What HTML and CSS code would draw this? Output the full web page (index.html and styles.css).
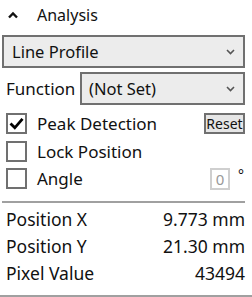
FILE: index.html
```html
<!DOCTYPE html>
<html lang="en">
<head>
  <meta charset="UTF-8" />
  <title>Analysis</title>
  <link rel="stylesheet" href="styles.css">
</head>
<body>
  <div class="panel">
    <div class="header">
      <svg class="caret" width="10" height="8" viewBox="0 0 10 8"><path d="M1 6.5 L5 2.5 L9 6.5" fill="none" stroke="#111" stroke-width="2.4"/></svg>
      <span>Analysis</span>
    </div>

    <div class="select wide">
      <span>Line Profile</span>
      <svg class="arrow" width="9" height="6" viewBox="0 0 9 6"><path d="M1 1 L4.5 4.5 L8 1" fill="none" stroke="#555" stroke-width="1.6"/></svg>
    </div>

    <div class="row func">
      <label>Function</label>
      <div class="select">
        <span>(Not Set)</span>
        <svg class="arrow" width="9" height="6" viewBox="0 0 9 6"><path d="M1 1 L4.5 4.5 L8 1" fill="none" stroke="#555" stroke-width="1.6"/></svg>
      </div>
    </div>

    <div class="checks">
      <div class="row check">
        <span class="box"><svg width="17" height="17" viewBox="0 0 17 17"><path d="M2.5 8.5 L6.8 12.8 L14.5 3.8" fill="none" stroke="#000" stroke-width="2.8"/></svg></span>
        <span class="lbl">Peak Detection</span>
        <button class="reset">Reset</button>
      </div>

      <div class="row check">
        <span class="box"></span>
        <span class="lbl">Lock Position</span>
      </div>

      <div class="row check">
        <span class="box"></span>
        <span class="lbl">Angle</span>
        <span class="num">0</span>
        <span class="deg">°</span>
      </div>
    </div>

    <div class="values">
      <div class="val"><span>Position X</span><span>9.773 mm</span></div>
      <div class="val"><span>Position Y</span><span>21.30 mm</span></div>
      <div class="val"><span>Pixel Value</span><span>43494</span></div>
    </div>
  </div>
</body>
</html>
```

FILE: styles.css
```css
body { margin: 0; background: #fff; font-family: "Noto Sans", "Open Sans", sans-serif; font-size: 16px; color: #111; }
.panel { width: 252px; height: 297px; box-sizing: border-box; padding: 0 7px 0 2px; border-bottom: 2px solid #a0a0a0; overflow: hidden; }
.header { display: flex; align-items: center; height: 33px; padding-left: 6px; font-size: 16px; }
.caret { margin-right: 19px; margin-top: -3px; }
.header span { margin-top: -3px; }
.select { display: flex; align-items: center; justify-content: space-between; height: 33px; box-sizing: border-box; border: 2px solid #707070; background: #ececec; padding: 0 8px 0 8px; font-size: 16.5px; }
.select .arrow { flex: none; }
.wide { margin-top: 2px; }
.row { display: flex; align-items: center; padding-left: 4px; }
.func { margin-top: 4px; }
.func label { width: 74px; font-size: 17px; }
.func .select { flex: 1; padding-left: 7px; }
.checks { margin-top: 4.75px; }
.check { height: 27.5px; }
.box { width: 21px; height: 21px; box-sizing: border-box; border: 2px solid #707070; display: flex; align-items: center; justify-content: center; margin-right: 10px; }
.lbl { flex: 1; font-size: 17px; }
.reset { flex: none; width: 41px; margin: 0; font-family: inherit; font-size: 14px; padding: 0; height: 21px; line-height: 15px; border: 2px solid #707070; background: #e6e6e6; color: #111; }
.num { width: 20px; height: 22px; box-sizing: border-box; border: 2px solid #cfcfcf; color: #999; text-align: center; font-size: 15px; line-height: 18px; margin-right: 8px; }
.deg { width: 7px; font-size: 14px; margin-top: -8px; }
.values { margin-top: 9px; border-top: 2px solid #a0a0a0; padding: 2.5px 0 0 4px; }
.val { display: flex; justify-content: space-between; height: 27px; align-items: center; font-size: 17.5px; }
```
